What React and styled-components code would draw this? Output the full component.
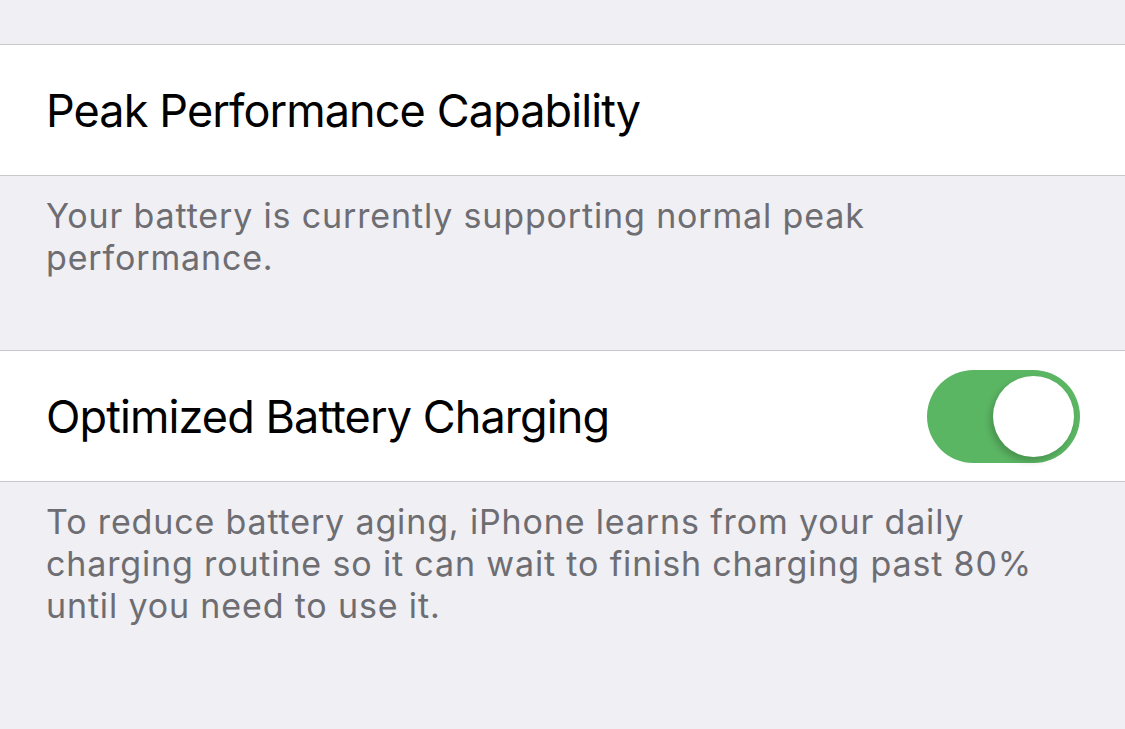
import React from "react";
import styled, { createGlobalStyle } from "styled-components";

const Global = createGlobalStyle`
  html, body { margin: 0; padding: 0; background: #efeff4; }
  body { font-family: "Inter", "Roboto", sans-serif; -webkit-font-smoothing: antialiased; }
`;

const Page = styled.div`
  width: 1125px;
  height: 729px;
  overflow: hidden;
  background: #efeff4;
  padding-top: 44px;
  box-sizing: border-box;
`;

const Group = styled.div`
  background: #ffffff;
  border-top: 1px solid #c8c7cc;
  border-bottom: 1px solid #c8c7cc;
`;

const Row = styled.div`
  height: 130px;
  display: flex;
  align-items: center;
  justify-content: space-between;
  padding: 0 45px 0 46px;
`;

const Label = styled.span`
  font-size: 45px;
  color: #000;
  letter-spacing: -0.9px;
`;

const Footer = styled.div`
  padding: ${(p) => p.$pt}px 47px 0 46px;
  height: ${(p) => p.$h}px;
  box-sizing: border-box;
  font-size: 34px;
  line-height: 42px;
  color: #6d6d72;
  letter-spacing: 0.85px;
`;

const Track = styled.div`
  width: 153px;
  height: 93px;
  border-radius: 47px;
  background: #5bb663;
  position: relative;
  flex: none;
`;

const Knob = styled.div`
  position: absolute;
  top: 6px;
  right: 6px;
  width: 81px;
  height: 81px;
  border-radius: 50%;
  background: #fff;
  box-shadow: -3px 4px 7px rgba(0, 0, 0, 0.2);
`;

export default function App() {
  return (
    <Page>
      <Global />
      <Group>
        <Row>
          <Label>Peak Performance Capability</Label>
        </Row>
      </Group>
      <Footer $pt={19} $h={174}>
        Your battery is currently supporting normal peak
        <br />
        performance.
      </Footer>
      <Group>
        <Row>
          <Label>Optimized Battery Charging</Label>
          <Track>
            <Knob />
          </Track>
        </Row>
      </Group>
      <Footer $pt={19} $h={200}>
        To reduce battery aging, iPhone learns from your daily
        <br />
        charging routine so it can wait to finish charging past 80%
        <br />
        until you need to use it.
      </Footer>
    </Page>
  );
}
